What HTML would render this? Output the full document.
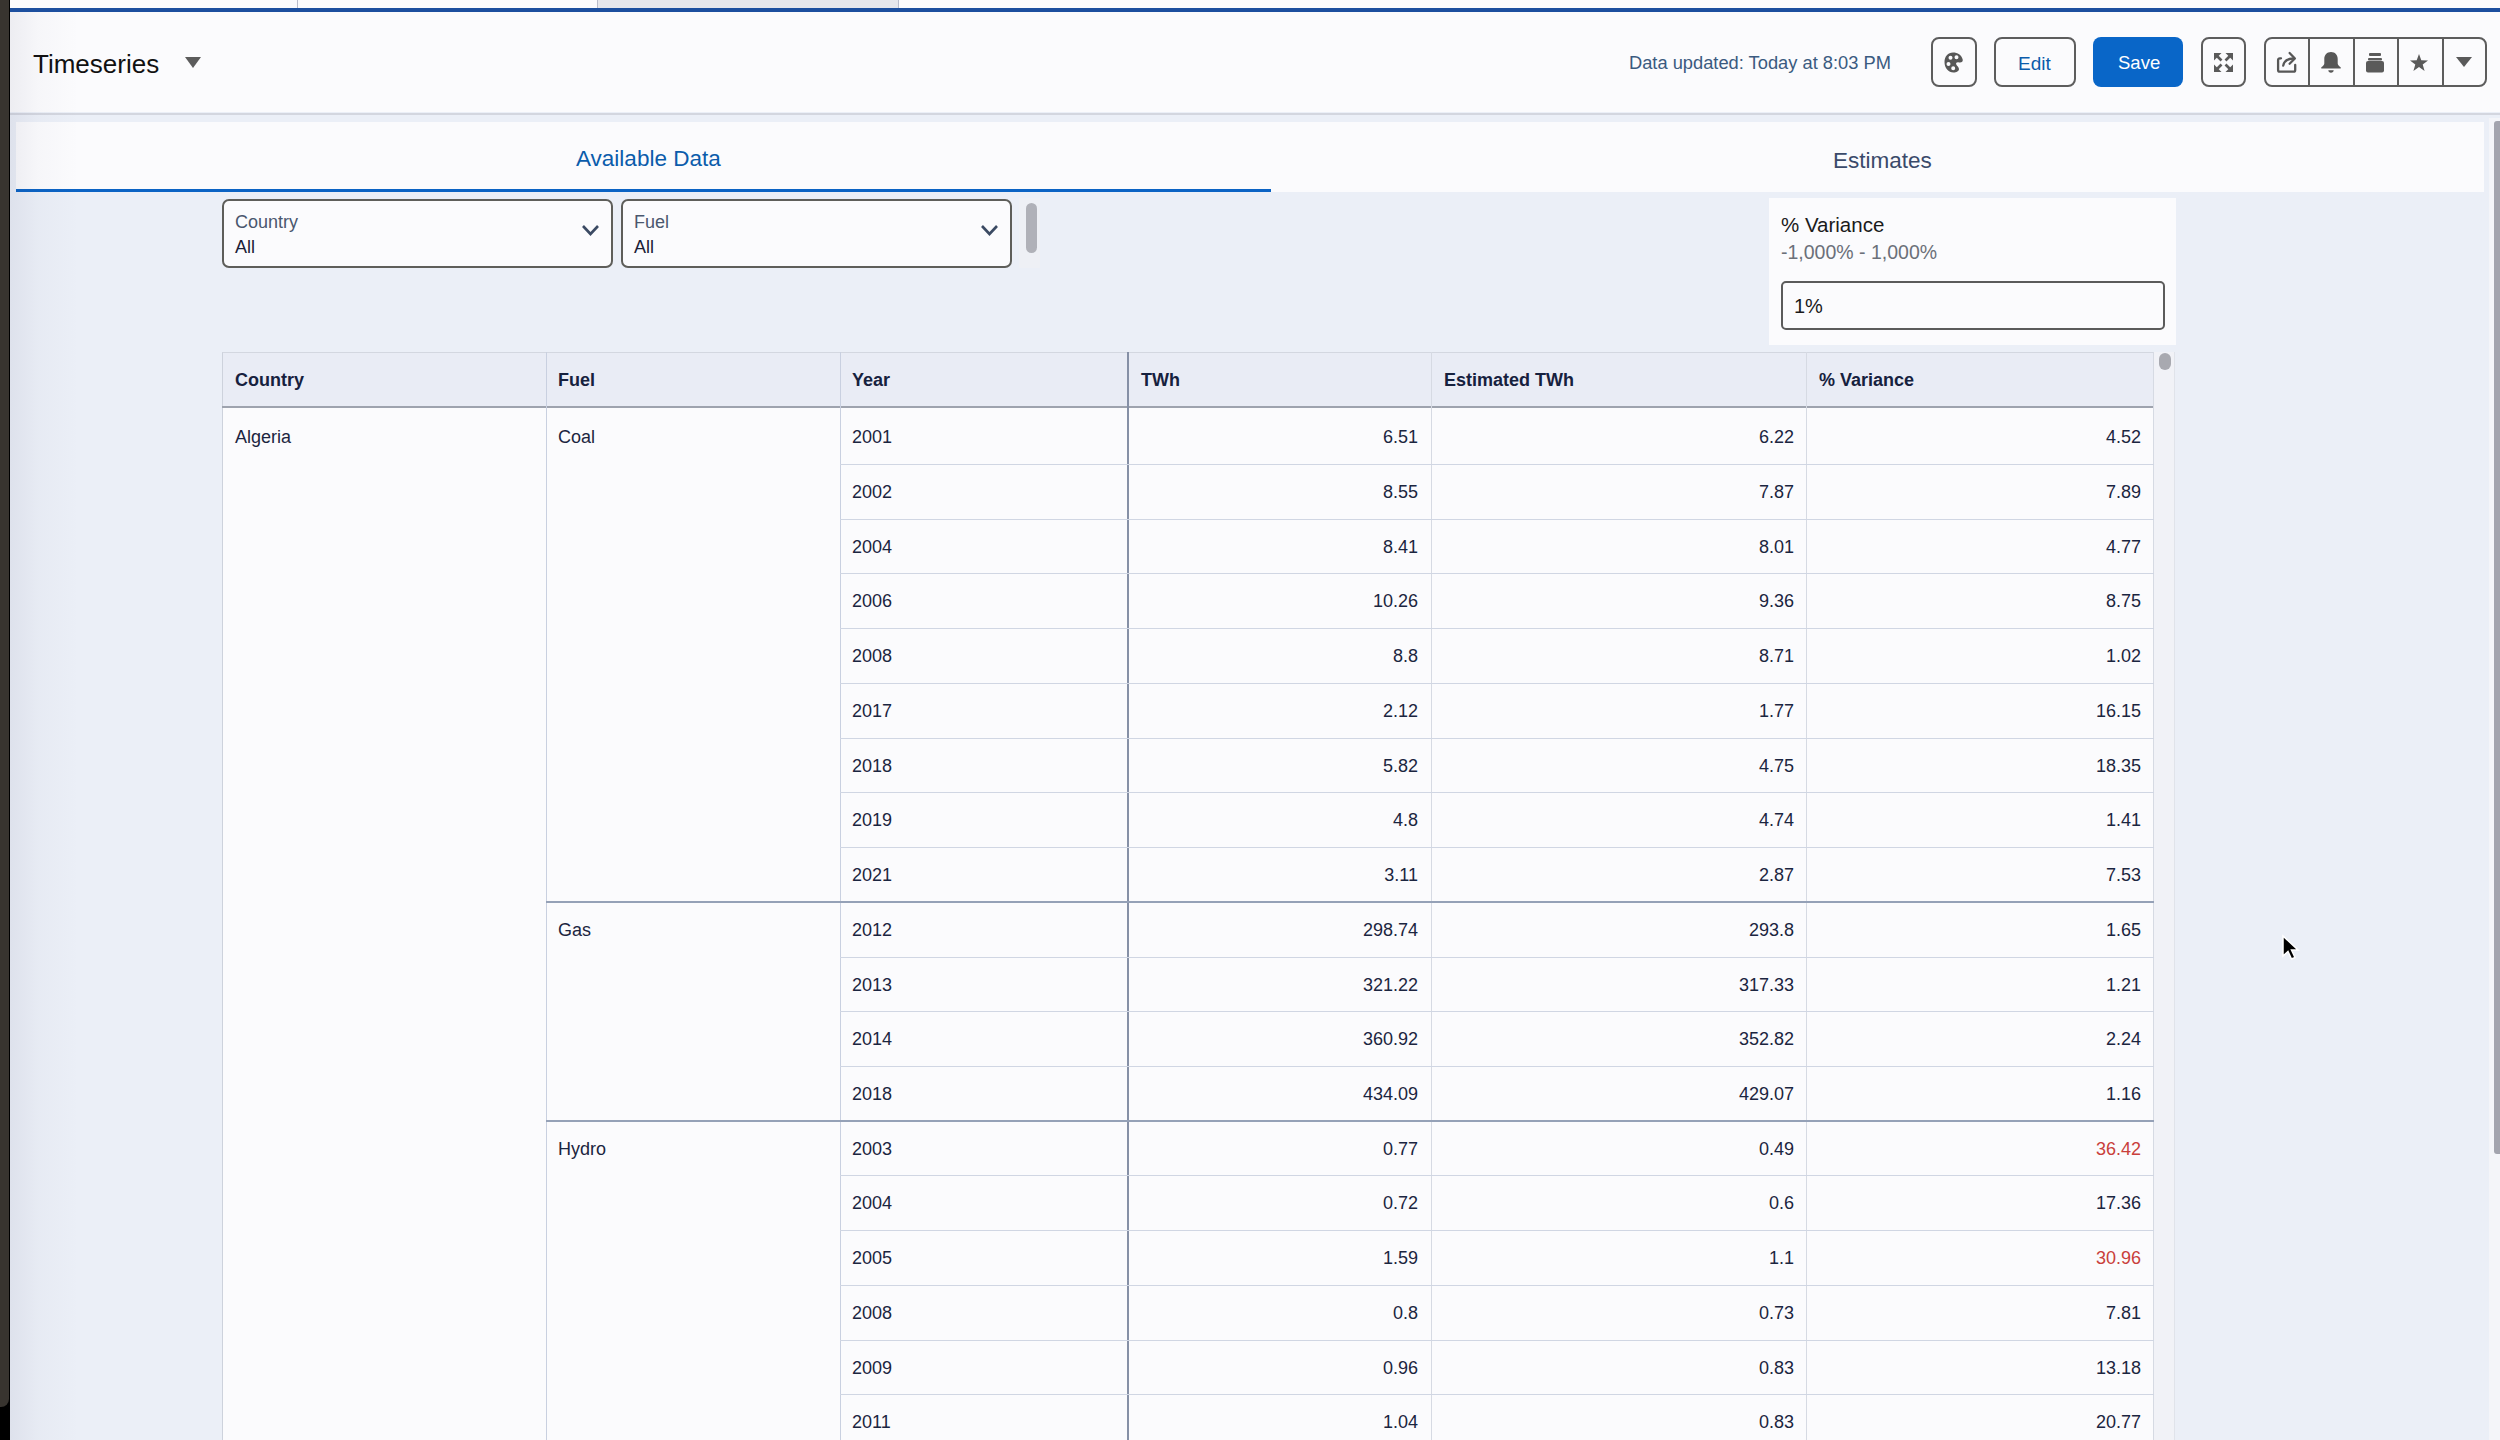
<!DOCTYPE html>
<html><head><meta charset="utf-8">
<style>
*{box-sizing:border-box;margin:0;padding:0}
html,body{width:2500px;height:1440px;overflow:hidden}
body{position:relative;background:#ebeff7;font-family:"Liberation Sans",sans-serif;color:#16213e}
.a{position:absolute}
.t{position:absolute;white-space:nowrap;line-height:1}
.h{font-size:18px;font-weight:700;color:#16213e}
.d{font-size:18px;color:#1b2540}
.r{text-align:right}
.red{color:#c93f3b}
.rl{left:840px;width:1314px;height:1px;background:#d0d6e3}
.btn{position:absolute;top:37px;height:50px;border:2px solid #5d5d5d;border-radius:8px;background:#fbfbfd}
.ic{position:absolute;fill:#5a5a5a}
.fbox{position:absolute;top:199px;height:69px;border:2px solid #5e5e5a;border-radius:7px;background:#fbfbfd}
</style></head><body>
<!-- left dark bar -->
<div class="a" style="left:0;top:0;width:10px;height:1440px;background:#000"></div>
<div class="a" style="left:0;top:0;width:9px;height:1407px;background:#38342f;border-bottom-right-radius:8px"></div>

<!-- top browser strip -->
<div class="a" style="left:10px;top:0;width:2490px;height:8px;background:#fbfbfd"></div>
<div class="a" style="left:598px;top:0;width:300px;height:8px;background:#e6e7ec"></div>
<div class="a" style="left:297px;top:0;width:1px;height:8px;background:#b9bccb"></div>
<div class="a" style="left:597px;top:0;width:1px;height:8px;background:#b9bccb"></div>
<div class="a" style="left:898px;top:0;width:1px;height:8px;background:#b9bccb"></div>
<div class="a" style="left:10px;top:8px;width:2490px;height:4px;background:#1c4f9f"></div>
<!-- header -->
<div class="a" style="left:10px;top:12px;width:2490px;height:100px;background:#fbfbfd"></div>
<div class="a" style="left:10px;top:113px;width:2490px;height:2px;background:#d3d6df"></div>
<div class="t" style="left:33px;top:51px;font-size:26px;color:#111">Timeseries</div>
<svg class="a" style="left:184px;top:56px" width="18" height="13" viewBox="0 0 18 13"><path d="M1 1 L17 1 L9 12 Z" fill="#5c5c5c"/></svg>
<div class="t" style="left:1629px;top:53.8px;font-size:18.3px;color:#3a5a80">Data updated: Today at 8:03 PM</div>
<!-- palette -->
<div class="btn" style="left:1931px;width:46px"></div>
<svg class="a" style="left:1944px;top:52px" width="20" height="21" viewBox="0 0 20 21"><path fill="#575757" fill-rule="evenodd" d="M9 0.5C4 0.5 0.5 4.5 0.5 10C0.5 16 4.5 20.5 9.5 20.5C12.5 20.5 15 19 15 17C15 15.3 12.8 13.8 12.2 12.3C11.7 10.8 13 10 15 10.5C17.5 11 19.2 9.5 18.7 7.5C17.7 3 13.5 0.5 9 0.5ZM4.5 5.8a2 2 0 1 0 4 0a2 2 0 1 0 -4 0ZM10.5 5.3a2 2 0 1 0 4 0a2 2 0 1 0 -4 0ZM2.5 12a2 2 0 1 0 4 0a2 2 0 1 0 -4 0ZM7.199999999999999 16.3a2 2 0 1 0 4 0a2 2 0 1 0 -4 0Z"/></svg>
<!-- edit -->
<div class="btn" style="left:1994px;width:82px"></div>
<div class="t" style="left:2018px;top:54px;font-size:19px;color:#0b5cab">Edit</div>
<!-- save -->
<div class="a" style="left:2093px;top:37px;width:90px;height:50px;border-radius:8px;background:#0966c8"></div>
<div class="t" style="left:2118px;top:54.3px;font-size:18.5px;color:#fff">Save</div>
<!-- fullscreen -->
<div class="btn" style="left:2201px;width:45px"></div>
<svg class="a" style="left:2213px;top:52px" width="21" height="21" viewBox="0 0 21 21"><g fill="#5a5a5a"><path d="M1 1h7.5L1 8.5z"/><path d="M20 1h-7.5L20 8.5z"/><path d="M1 20h7.5L1 12.5z"/><path d="M20 20h-7.5L20 12.5z"/></g><g stroke="#5a5a5a" stroke-width="2.6"><path d="M3 3L8.5 8.5"/><path d="M18 3L12.5 8.5"/><path d="M3 18L8.5 12.5"/><path d="M18 18L12.5 12.5"/></g></svg>
<!-- group -->
<div class="btn" style="left:2264px;width:223px"></div>
<div class="a" style="left:2308px;top:37px;width:2px;height:50px;background:#5d5d5d"></div>
<div class="a" style="left:2352.5px;top:37px;width:2px;height:50px;background:#5d5d5d"></div>
<div class="a" style="left:2397px;top:37px;width:2px;height:50px;background:#5d5d5d"></div>
<div class="a" style="left:2442px;top:37px;width:2px;height:50px;background:#5d5d5d"></div>
<svg class="a" style="left:2275px;top:50px" width="24" height="26" viewBox="0 0 24 26"><g fill="none" stroke="#575757" stroke-width="2.3" stroke-linecap="round" stroke-linejoin="round"><path d="M6 8.3H4.8Q3.1 8.3 3.1 10V19.9Q3.1 21.6 4.8 21.6H18.5Q20.2 21.6 20.2 19.9V15"/><path d="M8.2 15.6Q9.6 8.5 18.5 8.5"/><path d="M14.6 3L19.9 8.5L14.6 13.8"/></g></svg>
<svg class="a" style="left:2320px;top:51px" width="22" height="23" viewBox="0 0 22 23"><path fill="#575757" d="M11 1C7 1 4.3 3.8 4.3 8V12.5C4.3 14 2.8 15.2 1.3 16.2V17.5H20.7V16.2C19.2 15.2 17.7 14 17.7 12.5V8C17.7 3.8 15 1 11 1ZM8.3 19.2H13.7C13.7 20.5 12.5 21.7 11 21.7C9.5 21.7 8.3 20.5 8.3 19.2Z"/></svg>
<svg class="a" style="left:2365px;top:52px" width="20" height="21" viewBox="0 0 20 21"><g fill="#5a5a5a"><rect x="4" y="1" width="12" height="3" rx="1"/><rect x="3" y="6" width="14" height="2.5" rx="1"/><rect x="1" y="9" width="18" height="11.5" rx="2"/></g></svg>
<svg class="a" style="left:2409px;top:53px" width="20" height="19" viewBox="0 0 20 19"><path fill="#5a5a5a" d="M10 1 L12.3 7.3 L19 7.4 L13.7 11.5 L15.6 18 L10 14.1 L4.4 18 L6.3 11.5 L1 7.4 L7.7 7.3 Z"/></svg>
<svg class="a" style="left:2455px;top:56px" width="18" height="12" viewBox="0 0 18 12"><path d="M1 1 L17 1 L9 11 Z" fill="#5a5a5a"/></svg>

<!-- tabs -->
<div class="a" style="left:16px;top:122px;width:2468px;height:70px;background:#fbfbfd"></div>
<div class="a" style="left:16px;top:189px;width:1255px;height:3px;background:#0b63c4"></div>
<div class="t" style="left:576px;top:148px;font-size:22.5px;color:#0b5cab">Available Data</div>
<div class="t" style="left:1833px;top:150px;font-size:22.5px;color:#3a4a6a">Estimates</div>
<!-- right page scrollbar -->
<div class="a" style="left:2489px;top:118px;width:11px;height:1322px;background:#f4f5f9"></div>
<div class="a" style="left:2494px;top:121px;width:6px;height:1033px;border-radius:3px 0 0 3px;background:#a3a4ae"></div>

<!-- filters -->
<div class="fbox" style="left:222px;width:391px"></div>
<div class="t" style="left:235px;top:212.8px;font-size:18px;color:#4a576e">Country</div>
<div class="t" style="left:235px;top:237.8px;font-size:18px;color:#1a2036">All</div>
<svg class="a" style="left:581px;top:224px" width="19" height="13" viewBox="0 0 19 13"><path d="M2 2 L9.5 10 L17 2" fill="none" stroke="#3b4a63" stroke-width="2.6"/></svg>
<div class="fbox" style="left:621px;width:391px"></div>
<div class="t" style="left:634px;top:212.8px;font-size:18px;color:#4a576e">Fuel</div>
<div class="t" style="left:634px;top:237.8px;font-size:18px;color:#1a2036">All</div>
<svg class="a" style="left:980px;top:224px" width="19" height="13" viewBox="0 0 19 13"><path d="M2 2 L9.5 10 L17 2" fill="none" stroke="#3b4a63" stroke-width="2.6"/></svg>
<div class="a" style="left:1019px;top:198px;width:21px;height:70px;background:#eef0f5"></div>
<div class="a" style="left:1026px;top:203px;width:11px;height:50px;border-radius:6px;background:#b0b1b8"></div>

<!-- variance panel -->
<div class="a" style="left:1769px;top:198px;width:407px;height:147px;background:#fbfbfd"></div>
<div class="t" style="left:1781px;top:214.6px;font-size:20.5px;color:#1a1a1a">% Variance</div>
<div class="t" style="left:1781px;top:242.8px;font-size:19.5px;color:#6b7079">-1,000% - 1,000%</div>
<div class="a" style="left:1781px;top:281px;width:384px;height:49px;border:2px solid #5b5b5b;border-radius:5px;background:#fbfbfd"></div>
<div class="t" style="left:1794px;top:296.4px;font-size:20px;color:#1a1a1a">1%</div>

<!-- table scroll column -->
<div class="a" style="left:2154px;top:352px;width:21px;height:1088px;background:#f1f2f7;border-right:1px solid #e0e3ea"></div>
<div class="a" style="left:2159px;top:353px;width:12px;height:17px;border-radius:6px;background:#a8a9b0"></div>
<div class="a" style="left:222px;top:352px;width:1932px;height:1088px;background:#fbfbfd;border-left:1px solid #cdd2dc"></div>
<div class="a" style="left:222px;top:352px;width:1932px;height:54px;background:#e9ecf5;border-top:1px solid #d3d7e0;border-left:1px solid #cdd2dc"></div>
<div class="a" style="left:222px;top:406px;width:1932px;height:2px;background:#9ea3ae"></div>
<div class="a" style="left:546px;top:352px;width:1px;height:1088px;background:#c9d0e0"></div>
<div class="a" style="left:840px;top:352px;width:1px;height:1088px;background:#c9d0e0"></div>
<div class="a" style="left:1127px;top:352px;width:2px;height:1088px;background:#8690a6"></div>
<div class="a" style="left:1431px;top:352px;width:1px;height:1088px;background:#d6dae3"></div>
<div class="a" style="left:1806px;top:352px;width:1px;height:1088px;background:#d6dae3"></div>
<div class="a" style="left:2153px;top:352px;width:1px;height:1088px;background:#d6dae3"></div>
<div class="t h" style="left:235px;top:371.3px">Country</div>
<div class="t h" style="left:558px;top:371.3px">Fuel</div>
<div class="t h" style="left:852px;top:371.3px">Year</div>
<div class="t h" style="left:1141px;top:371.3px">TWh</div>
<div class="t h" style="left:1444px;top:371.3px">Estimated TWh</div>
<div class="t h" style="left:1819px;top:371.3px">% Variance</div>
<div class="a rl" style="top:464.0px"></div>
<div class="a rl" style="top:518.7px"></div>
<div class="a rl" style="top:573.4px"></div>
<div class="a rl" style="top:628.2px"></div>
<div class="a rl" style="top:682.9px"></div>
<div class="a rl" style="top:737.6px"></div>
<div class="a rl" style="top:792.3px"></div>
<div class="a rl" style="top:847.0px"></div>
<div class="a" style="left:546px;top:900.8px;width:1608px;height:2px;background:#95a1b7"></div>
<div class="a rl" style="top:956.5px"></div>
<div class="a rl" style="top:1011.2px"></div>
<div class="a rl" style="top:1065.9px"></div>
<div class="a" style="left:546px;top:1119.6px;width:1608px;height:2px;background:#95a1b7"></div>
<div class="a rl" style="top:1175.4px"></div>
<div class="a rl" style="top:1230.1px"></div>
<div class="a rl" style="top:1284.8px"></div>
<div class="a rl" style="top:1339.5px"></div>
<div class="a rl" style="top:1394.2px"></div>
<div class="a rl" style="top:1449.0px"></div>
<div class="t d" style="left:235px;top:428.3px">Algeria</div>
<div class="t d" style="left:558px;top:428.3px">Coal</div>
<div class="t d" style="left:852px;top:428.3px">2001</div>
<div class="t d r" style="right:1082px;top:428.3px">6.51</div>
<div class="t d r" style="right:706px;top:428.3px">6.22</div>
<div class="t d r" style="right:359px;top:428.3px">4.52</div>
<div class="t d" style="left:852px;top:483.0px">2002</div>
<div class="t d r" style="right:1082px;top:483.0px">8.55</div>
<div class="t d r" style="right:706px;top:483.0px">7.87</div>
<div class="t d r" style="right:359px;top:483.0px">7.89</div>
<div class="t d" style="left:852px;top:537.7px">2004</div>
<div class="t d r" style="right:1082px;top:537.7px">8.41</div>
<div class="t d r" style="right:706px;top:537.7px">8.01</div>
<div class="t d r" style="right:359px;top:537.7px">4.77</div>
<div class="t d" style="left:852px;top:592.4px">2006</div>
<div class="t d r" style="right:1082px;top:592.4px">10.26</div>
<div class="t d r" style="right:706px;top:592.4px">9.36</div>
<div class="t d r" style="right:359px;top:592.4px">8.75</div>
<div class="t d" style="left:852px;top:647.1px">2008</div>
<div class="t d r" style="right:1082px;top:647.1px">8.8</div>
<div class="t d r" style="right:706px;top:647.1px">8.71</div>
<div class="t d r" style="right:359px;top:647.1px">1.02</div>
<div class="t d" style="left:852px;top:701.9px">2017</div>
<div class="t d r" style="right:1082px;top:701.9px">2.12</div>
<div class="t d r" style="right:706px;top:701.9px">1.77</div>
<div class="t d r" style="right:359px;top:701.9px">16.15</div>
<div class="t d" style="left:852px;top:756.6px">2018</div>
<div class="t d r" style="right:1082px;top:756.6px">5.82</div>
<div class="t d r" style="right:706px;top:756.6px">4.75</div>
<div class="t d r" style="right:359px;top:756.6px">18.35</div>
<div class="t d" style="left:852px;top:811.3px">2019</div>
<div class="t d r" style="right:1082px;top:811.3px">4.8</div>
<div class="t d r" style="right:706px;top:811.3px">4.74</div>
<div class="t d r" style="right:359px;top:811.3px">1.41</div>
<div class="t d" style="left:852px;top:866.0px">2021</div>
<div class="t d r" style="right:1082px;top:866.0px">3.11</div>
<div class="t d r" style="right:706px;top:866.0px">2.87</div>
<div class="t d r" style="right:359px;top:866.0px">7.53</div>
<div class="t d" style="left:558px;top:920.7px">Gas</div>
<div class="t d" style="left:852px;top:920.7px">2012</div>
<div class="t d r" style="right:1082px;top:920.7px">298.74</div>
<div class="t d r" style="right:706px;top:920.7px">293.8</div>
<div class="t d r" style="right:359px;top:920.7px">1.65</div>
<div class="t d" style="left:852px;top:975.5px">2013</div>
<div class="t d r" style="right:1082px;top:975.5px">321.22</div>
<div class="t d r" style="right:706px;top:975.5px">317.33</div>
<div class="t d r" style="right:359px;top:975.5px">1.21</div>
<div class="t d" style="left:852px;top:1030.2px">2014</div>
<div class="t d r" style="right:1082px;top:1030.2px">360.92</div>
<div class="t d r" style="right:706px;top:1030.2px">352.82</div>
<div class="t d r" style="right:359px;top:1030.2px">2.24</div>
<div class="t d" style="left:852px;top:1084.9px">2018</div>
<div class="t d r" style="right:1082px;top:1084.9px">434.09</div>
<div class="t d r" style="right:706px;top:1084.9px">429.07</div>
<div class="t d r" style="right:359px;top:1084.9px">1.16</div>
<div class="t d" style="left:558px;top:1139.6px">Hydro</div>
<div class="t d" style="left:852px;top:1139.6px">2003</div>
<div class="t d r" style="right:1082px;top:1139.6px">0.77</div>
<div class="t d r" style="right:706px;top:1139.6px">0.49</div>
<div class="t d r red" style="right:359px;top:1139.6px">36.42</div>
<div class="t d" style="left:852px;top:1194.3px">2004</div>
<div class="t d r" style="right:1082px;top:1194.3px">0.72</div>
<div class="t d r" style="right:706px;top:1194.3px">0.6</div>
<div class="t d r" style="right:359px;top:1194.3px">17.36</div>
<div class="t d" style="left:852px;top:1249.1px">2005</div>
<div class="t d r" style="right:1082px;top:1249.1px">1.59</div>
<div class="t d r" style="right:706px;top:1249.1px">1.1</div>
<div class="t d r red" style="right:359px;top:1249.1px">30.96</div>
<div class="t d" style="left:852px;top:1303.8px">2008</div>
<div class="t d r" style="right:1082px;top:1303.8px">0.8</div>
<div class="t d r" style="right:706px;top:1303.8px">0.73</div>
<div class="t d r" style="right:359px;top:1303.8px">7.81</div>
<div class="t d" style="left:852px;top:1358.5px">2009</div>
<div class="t d r" style="right:1082px;top:1358.5px">0.96</div>
<div class="t d r" style="right:706px;top:1358.5px">0.83</div>
<div class="t d r" style="right:359px;top:1358.5px">13.18</div>
<div class="t d" style="left:852px;top:1413.2px">2011</div>
<div class="t d r" style="right:1082px;top:1413.2px">1.04</div>
<div class="t d r" style="right:706px;top:1413.2px">0.83</div>
<div class="t d r" style="right:359px;top:1413.2px">20.77</div><!-- shade -->
<div class="a" style="left:10px;top:12px;width:70px;height:1428px;background:linear-gradient(to right,rgba(50,50,90,0.07),rgba(50,50,90,0.025) 40%,rgba(50,50,90,0))"></div>
<!-- cursor -->
<svg class="a" style="left:2280px;top:934px" width="20" height="28" viewBox="0 0 20 28"><path d="M3 2 L3 22 L8 17.5 L11.5 25 L15 23.5 L11.5 16 L18 16 Z" fill="#000" stroke="#fff" stroke-width="1.5"/></svg>
</body></html>
